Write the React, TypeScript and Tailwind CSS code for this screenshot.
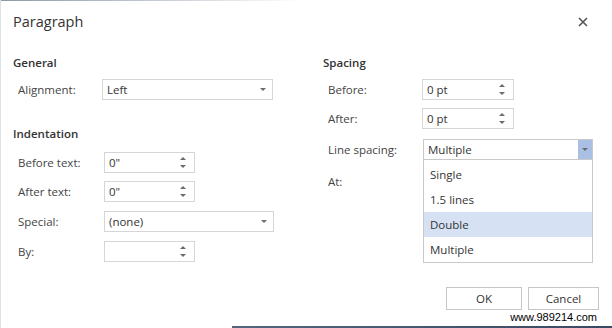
import React from 'react';

function Caret({ up = false }: { up?: boolean }) {
  return (
    <svg width="6" height="3" viewBox="0 0 6 3" className="block">
      <path d={up ? 'M0 3 L3 0 L6 3 Z' : 'M0 0 L6 0 L3 3 Z'} fill="#6b6b6b" />
    </svg>
  );
}

function SelectBox({ value, width }: { value: string; width: string }) {
  return (
    <div className={`${width} h-[21px] border border-[#d6d6d6] bg-white flex items-center justify-between pl-[4px] pr-[6px]`}>
      <span>{value}</span>
      <Caret />
    </div>
  );
}

function SpinBox({ value, width }: { value: string; width: string }) {
  return (
    <div className={`${width} h-[21px] border border-[#d6d6d6] bg-white flex items-center justify-between pl-[4px] pr-[8px]`}>
      <span>{value}</span>
      <div className="flex flex-col gap-[5px]">
        <Caret up />
        <Caret />
      </div>
    </div>
  );
}

function Row({ label, labelW, children, className = '' }: { label: string; labelW: string; children?: React.ReactNode; className?: string }) {
  return (
    <div className={`flex items-center h-[21px] ${className}`}>
      <div className={`${labelW} pl-[5px] text-[#444]`}>{label}</div>
      {children}
    </div>
  );
}

export default function App() {
  const options = ['Single', '1.5 lines', 'Double', 'Multiple'];

  return (
    <div className="w-[612px] h-[328px] bg-white relative overflow-hidden flex flex-col font-['Open_Sans',sans-serif] text-[11.5px] text-[#333] border-l border-[#dce2ea]">
      <div className="h-px w-[300px] bg-gradient-to-r from-[#8f99a7] via-[#c3c9d1] to-white" />

      {/* header */}
      <div className="h-[41px] flex items-center justify-between pl-[12px] pr-[24px]">
        <span className="text-[14.5px] text-[#333]">Paragraph</span>
        <svg width="10" height="10" viewBox="0 0 10 10">
          <path d="M1 1 L9 9 M9 1 L1 9" stroke="#555" strokeWidth="1.6" />
        </svg>
      </div>

      {/* body */}
      <div className="flex">
        <div className="w-[309px] pl-[12px]">
          <div className="mt-[12px] h-[16px] font-semibold text-[#333]">General</div>
          <Row label="Alignment:" labelW="w-[89px]" className="mt-[9px]">
            <SelectBox value="Left" width="w-[171px]" />
          </Row>
          <div className="mt-[25px] h-[16px] font-semibold text-[#333]">Indentation</div>
          <Row label="Before text:" labelW="w-[91px]" className="mt-[11px]">
            <SpinBox value={'0"'} width="w-[91px]" />
          </Row>
          <Row label="After text:" labelW="w-[91px]" className="mt-[8px]">
            <SpinBox value={'0"'} width="w-[91px]" />
          </Row>
          <Row label="Special:" labelW="w-[91px]" className="mt-[9px]">
            <SelectBox value="(none)" width="w-[170px]" />
          </Row>
          <Row label="By:" labelW="w-[91px]" className="mt-[9px]">
            <SpinBox value="" width="w-[91px]" />
          </Row>
        </div>

        <div className="pl-[13px]">
          <div className="mt-[12px] h-[16px] font-semibold text-[#333]">Spacing</div>
          <Row label="Before:" labelW="w-[99px]" className="mt-[9px]">
            <SpinBox value="0 pt" width="w-[92px]" />
          </Row>
          <Row label="After:" labelW="w-[99px]" className="mt-[8px]">
            <SpinBox value="0 pt" width="w-[92px]" />
          </Row>
          <Row label="Line spacing:" labelW="w-[100px]" className="mt-[10px]">
            <div className="relative">
              <div className="w-[170px] h-[21px] border border-[#c9c9c9] bg-white flex items-center justify-between pl-[4px]">
                <span>Multiple</span>
                <div className="w-[14px] h-full bg-[#a9c0e4] flex items-center justify-center">
                  <Caret />
                </div>
              </div>
              <div className="absolute left-0 top-[21px] w-[170px] h-[103px] border border-[#c9c9c9] border-t-0 bg-white pt-[2px] z-10">
                {options.map((o) => (
                  <div key={o} className={`h-[25px] flex items-center pl-[6px] ${o === 'Double' ? 'bg-[#d6e2f3]' : ''}`}>
                    {o}
                  </div>
                ))}
              </div>
            </div>
          </Row>
          <Row label="At:" labelW="w-[100px]" className="mt-[11px]" />
        </div>
      </div>

      {/* footer */}
      <div className="mt-auto flex justify-end gap-[6px] pr-[13px]">
        <button className="w-[76px] h-[23px] border border-[#c6c6c6] bg-white text-[#333]">OK</button>
        <button className="w-[71px] h-[23px] border border-[#c6c6c6] bg-white text-[#333]">Cancel</button>
      </div>
      <div className="flex justify-end pr-[15px] h-[14px] items-center mb-[2px]">
        <span className="font-['Liberation_Sans',sans-serif] text-[11px] text-black leading-none">www.989214.com</span>
      </div>
      <div className="flex justify-end">
        <div className="w-[380px] h-[2px] bg-gradient-to-r from-[#55657c] to-[#3a4a63]" />
      </div>
    </div>
  );
}
